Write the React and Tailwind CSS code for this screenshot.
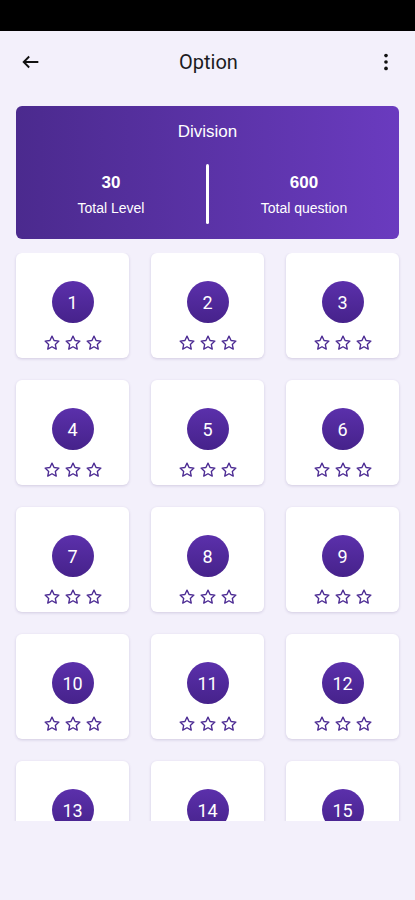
import React from 'react';

function Star() {
    return (
        <svg viewBox="0 0 24 24" className="h-[18px] w-[18px]" fill="none" stroke="#4c2b93" strokeWidth="1.8" strokeLinejoin="round">
            <path d="M12 2.8l2.75 5.9 6.45.75-4.8 4.4 1.3 6.35L12 17l-5.7 3.2 1.3-6.35-4.8-4.4 6.45-.75z" />
        </svg>
    );
}

function LevelCard({ n }) {
    return (
        <div className="h-[105px] rounded-md bg-white shadow-[0_1px_3px_rgba(60,40,110,0.18)] flex flex-col items-center pt-[28px]">
            <div className="h-[42px] w-[42px] rounded-full bg-gradient-to-b from-[#5b30ab] to-[#46228b] flex items-center justify-center text-white text-[18px]">
                {n}
            </div>
            <div className="mt-[11px] flex gap-[3px]">
                <Star />
                <Star />
                <Star />
            </div>
        </div>
    );
}

export default function App() {
    const levels = Array.from({ length: 15 }, (_, i) => i + 1);
    return (
        <div className="w-[415px] h-[900px] bg-[#f3f0fb] flex flex-col font-['Roboto',sans-serif] overflow-hidden">
            <div className="h-[31px] bg-black flex-shrink-0" />
            <div className="h-[62px] flex items-center justify-between px-[20px] flex-shrink-0">
                <svg viewBox="0 0 24 24" className="h-[22px] w-[22px]" fill="none" stroke="#111" strokeWidth="2">
                    <path d="M20 12H4M10 6l-6 6 6 6" />
                </svg>
                <h1 className="text-[20px] text-[#1c1b1f]">Option</h1>
                <svg viewBox="0 0 24 24" className="h-[22px] w-[22px] -mr-[2px]" fill="#111">
                    <circle cx="12" cy="5" r="2" />
                    <circle cx="12" cy="12" r="2" />
                    <circle cx="12" cy="19" r="2" />
                </svg>
            </div>
            <div className="mx-[16px] mt-[13px] h-[133px] rounded-md bg-gradient-to-r from-[#4b2a8e] to-[#6a3bbf] text-white flex flex-col items-center pt-[13px] flex-shrink-0 font-['Liberation_Sans',sans-serif]">
                <div className="text-[17px]">Division</div>
                <div className="w-full flex items-center mt-[19px]">
                    <div className="flex-1 flex flex-col items-center pt-[2px]">
                        <div className="text-[17px] font-bold">30</div>
                        <div className="text-[14px] mt-[2px]">Total Level</div>
                    </div>
                    <div className="w-[3px] h-[60px] bg-white rounded-full" />
                    <div className="flex-1 flex flex-col items-center pt-[2px]">
                        <div className="text-[17px] font-bold">600</div>
                        <div className="text-[14px] mt-[2px]">Total question</div>
                    </div>
                </div>
            </div>
            <div className="mt-[14px] h-[568px] overflow-hidden px-[16px] flex-shrink-0">
                <div className="grid grid-cols-3 gap-x-[22px] gap-y-[22px]">
                    {levels.map((n) => (
                        <LevelCard key={n} n={n} />
                    ))}
                </div>
            </div>
        </div>
    );
}
